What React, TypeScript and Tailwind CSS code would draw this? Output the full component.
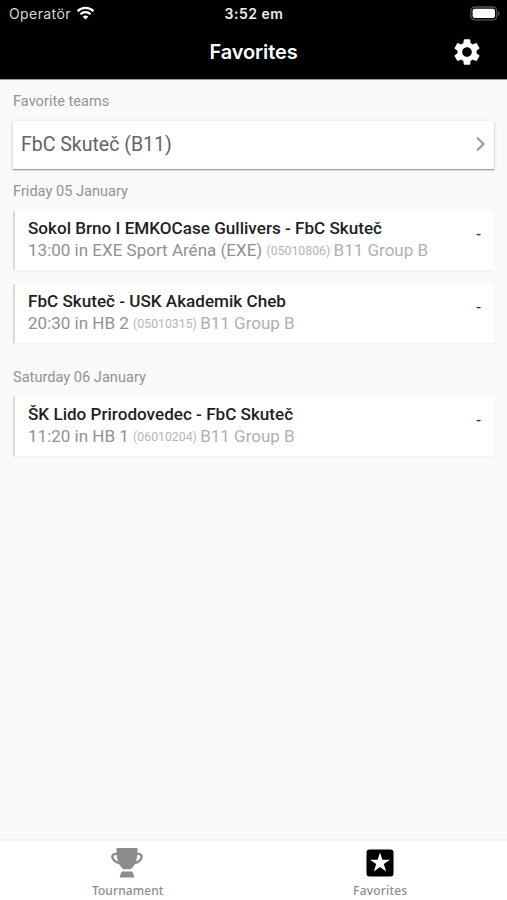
import React from "react";
import { MdSettings } from "react-icons/md";

type Match = { teams: string; place: string; id: string; group: string };

const friday: Match[] = [
  { teams: "Sokol Brno I EMKOCase Gullivers - FbC Skuteč", place: "13:00 in EXE Sport Aréna (EXE)", id: "(05010806)", group: "B11 Group B" },
  { teams: "FbC Skuteč - USK Akademik Cheb", place: "20:30 in HB 2", id: "(05010315)", group: "B11 Group B" },
];
const saturday: Match[] = [
  { teams: "ŠK Lido Prirodovedec - FbC Skuteč", place: "11:20 in HB 1", id: "(06010204)", group: "B11 Group B" },
];

function MatchCard({ match }: { match: Match }) {
  return (
    <div className="flex h-[59px] justify-between border-l-2 border-[#dcdcdc] bg-white pt-1.5 pr-[13px] pl-[13px] shadow-[0_1px_2px_rgba(0,0,0,0.05)]">
      <div className="whitespace-nowrap">
        <div className="text-[17.1px] leading-[22px] font-medium text-[#1f1f1f]">{match.teams}</div>
        <div className="text-[17.03px] leading-[22px] text-[#919191]">
          {match.place} <span className="align-[1px] text-[12.3px] leading-none text-[#b5b5b5]">{match.id}</span>{" "}
          <span className="-ml-px text-[#b0b0b0]">{match.group}</span>
        </div>
      </div>
      <div className="pt-[6px] text-[15px] leading-[22px] font-medium text-[#333]">-</div>
    </div>
  );
}

export default function App() {
  return (
    <div className="flex h-[900px] w-[507px] flex-col overflow-hidden bg-[#fafafa] font-['Roboto','Liberation_Sans',sans-serif]">
      <header className="h-20 shrink-0 border-b border-[#9a9a9a] bg-black font-['Inter','Liberation_Sans',sans-serif] text-white">
        <div className="grid h-[27px] grid-cols-3 items-center pr-[7px] pl-[9px]">
          <div className="flex items-center gap-[5px] text-[14px] text-[#d8d8d8]">
            <span className="tracking-[0.4px]">Operatör</span>
            <svg className="mb-[2px]" width="19" height="14" viewBox="0 0 18 14" fill="none" stroke="white" strokeWidth="2.3">
              <path d="M1 5.2C5.4.8 12.6.8 17 5.2" />
              <path d="M4 8.3c2.8-2.8 7.2-2.8 10 0" />
              <path d="M9 13.5 6.2 10.7c1.6-1.5 4-1.5 5.6 0Z" fill="white" stroke="none" />
            </svg>
          </div>
          <div className="pr-[1px] text-center text-[14px] font-semibold tracking-[0.5px] text-[#eee]">3:52 em</div>
          <svg className="mb-px ml-auto" width="31" height="15" viewBox="0 0 31 15">
            <rect x="1.8" y="1" width="26" height="12.8" rx="3.8" fill="none" stroke="#555" strokeWidth="1.3" />
            <rect x="3.6" y="2.8" width="22.4" height="9.2" rx="2" fill="white" />
            <path d="M29.2 5v5c2-.9 2-4.1 0-5Z" fill="#555" />
          </svg>
        </div>
        <div className="grid h-[52px] grid-cols-[1fr_auto_1fr] items-center px-6">
          <h1 className="col-start-2 pb-[2px] text-[20px] font-semibold tracking-[-0.1px]">Favorites</h1>
          <MdSettings className="mb-[2px] ml-auto size-8" />
        </div>
      </header>

      <main className="flex-1 px-[13px] text-[14.6px] text-[#929292]">
        <h2 className="pt-3 leading-[18px]">Favorite teams</h2>
        <div className="mt-[11px] flex h-12 items-center justify-between bg-white pr-[8px] pl-2 text-[19.5px] text-[#646464] shadow-[0_1px_1px_rgba(0,0,0,0.3),0_1px_4px_rgba(0,0,0,0.16)]">
          <span>FbC Skuteč (B11)</span>
          <svg className="mb-[3px]" width="11" height="16" viewBox="0 0 11 16" fill="none" stroke="#9c9c9c" strokeWidth="2.2">
            <path d="m2 1.5 6.5 6.5L2 14.5" />
          </svg>
        </div>
        <h2 className="mt-[13px] leading-[18px]">Friday 05 January</h2>
        <div className="mt-[11px] flex flex-col gap-[14px]">
          {friday.map((m) => <MatchCard key={m.id} match={m} />)}
        </div>
        <h2 className="mt-[25px] leading-[18px]">Saturday 06 January</h2>
        <div className="mt-[11px]">
          {saturday.map((m) => <MatchCard key={m.id} match={m} />)}
        </div>
      </main>

      <nav className="grid h-[61px] shrink-0 grid-cols-2 border-t-2 border-[#f3f3f3] bg-white font-['Noto_Sans','Open_Sans',sans-serif] text-[12px] leading-4 font-medium tracking-[0.1px] text-[#8d8d8d]">
        <div className="flex flex-col items-center pt-[7px]">
          <svg width="32" height="30" viewBox="0 0 32 30" fill="#8c8c8c">
            <path d="M5.5 0h21v3c0 7-1.5 12.5-4.5 16-1.2 1.3-2 1.800-3 2.300h-6c-1-.5-1.800-1-3-2.300C7 15.500 5.500 10 5.500 3Z" />
            <path d="M6.5 6C-1.5 4.500-.5 14 11.500 16M25.500 6c8-1.500 7 8-5 10" fill="none" stroke="#8c8c8c" strokeWidth="2.3" />
            <path d="M11 23.500h10c1.200 1.500 2 3.500 2.200 6H8.800c.2-2.500 1-4.500 2.200-6Z" />
          </svg>
          <span className="mt-[5px] pl-[2px]">Tournament</span>
        </div>
        <div className="flex flex-col items-center pt-[7px]">
          <svg width="28" height="30" viewBox="0 0 28 30">
            <rect x=".5" y="1.5" width="27" height="27" rx="3" fill="black" />
            <path d="m14 4.500 2.400 7.200h7.600l-6.200 4.400 2.400 7.300-6.200-4.500-6.200 4.500 2.400-7.300L4 11.700h7.600Z" fill="white" />
          </svg>
          <span className="mt-[5px] tracking-[0.2px]">Favorites</span>
        </div>
      </nav>
    </div>
  );
}
